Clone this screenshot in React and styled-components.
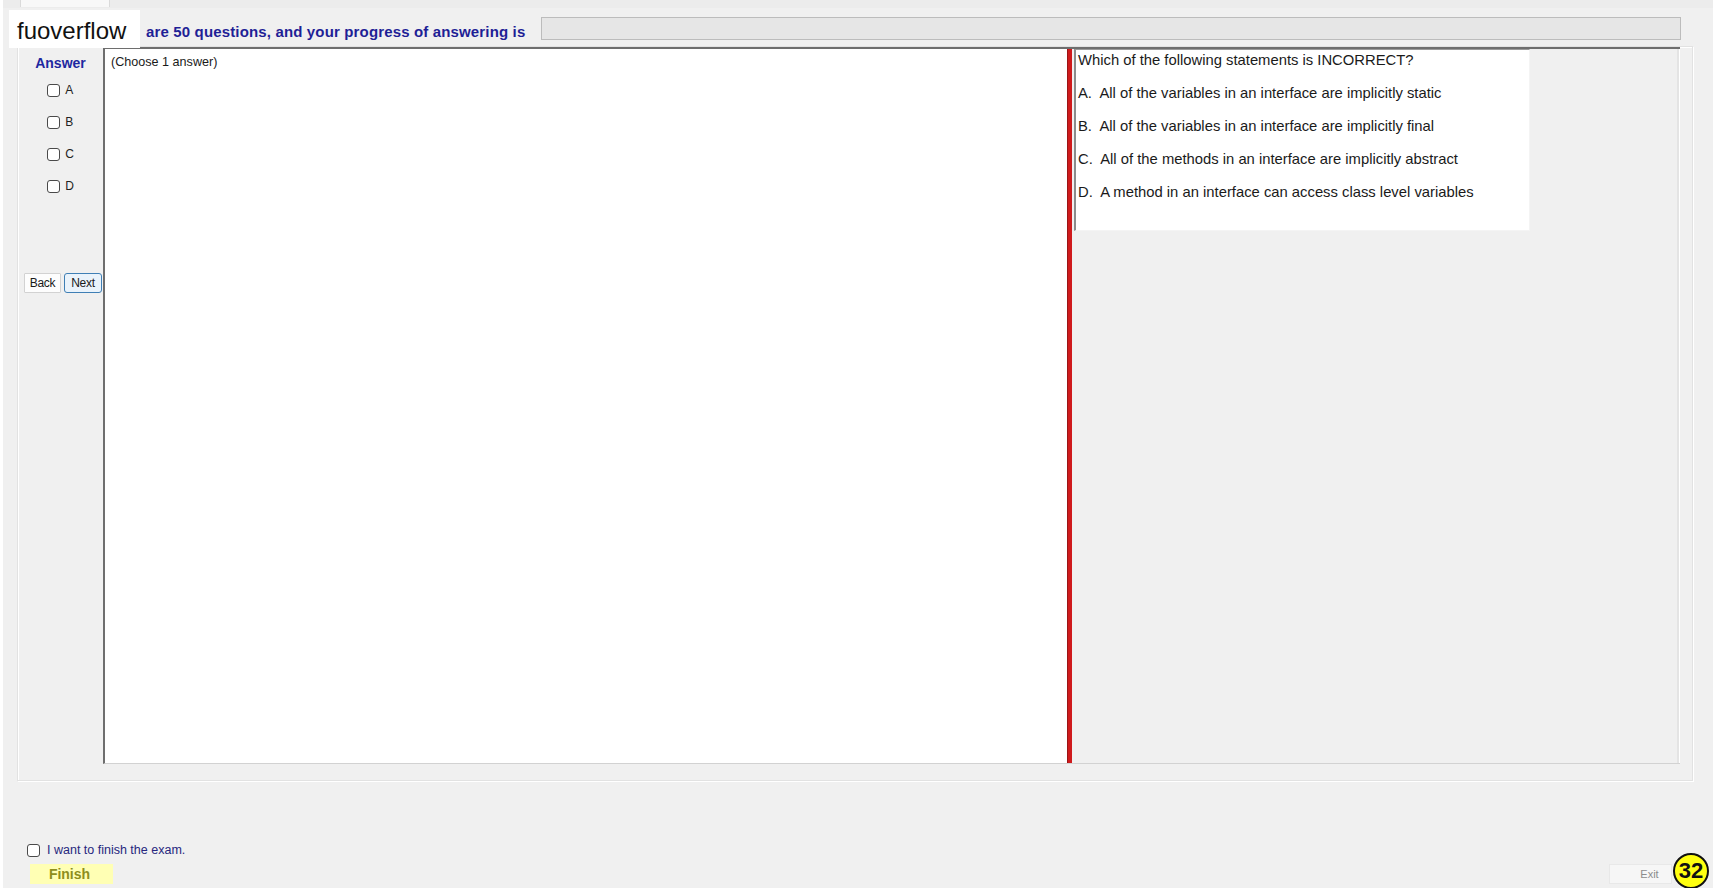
import React from "react";
import styled, { createGlobalStyle } from "styled-components";

const GlobalStyle = createGlobalStyle`
  html, body {
    margin: 0;
    padding: 0;
    background: #ffffff;
    font-family: "Liberation Sans", Arial, sans-serif;
    overflow: hidden;
  }
`;

const Window = styled("div")`
  position: relative;
  width: 1710px;
  height: 888px;
  margin-left: 3px;
  background: #f0f0f0;
  display: flex;
  flex-direction: column;
  box-sizing: border-box;
`;

const TabStrip = styled("div")`
  height: 8px;
  padding-left: 17px;
  display: flex;
  background: #ececec;
`;

const Tab = styled("div")`
  width: 88px;
  height: 7px;
  background: #f8f8f8;
  border: 1px solid #dadada;
  border-top: 0;
  border-bottom: 0;
`;

const Header = styled("div")`
  height: 38px;
  display: flex;
  align-items: flex-start;
  padding-left: 6px;
  position: relative;
  z-index: 1;
`;

const Logo = styled("div")`
  width: 131px;
  height: 38px;
  margin-top: 2px;
  background: #ffffff;
  color: #111;
  font-size: 24px;
  line-height: 42px;
  padding-left: 8px;
  box-sizing: border-box;
`;

const ProgressLabel = styled("div")`
  margin-left: 6px;
  margin-top: 15px;
  color: #1f1f96;
  font-weight: bold;
  font-size: 15px;
  letter-spacing: 0.15px;
  line-height: 18px;
  white-space: nowrap;
`;

const ProgressBar = styled("div")`
  flex: 1;
  height: 23px;
  margin: 9px 32px 0 16px;
  background: #e6e6e6;
  border: 1px solid #bcbcbc;
  box-sizing: border-box;
`;

const Frame = styled("div")`
  margin: 0 20px 0 14px;
  height: 735px;
  box-sizing: border-box;
  border: 1px solid #e2e2e2;
  box-shadow: inset 1px 1px 0 #ffffff, 1px 1px 0 #ffffff;
  display: flex;
  padding: 0 12px 16px 0;
`;

const LeftCol = styled("div")`
  width: 85px;
  flex: none;
  display: flex;
  flex-direction: column;
  align-items: center;
`;

const AnswerTitle = styled("div")`
  margin-top: 7px;
  color: #1e28a0;
  font-weight: bold;
  font-size: 14px;
  line-height: 18px;
`;

const ChoiceList = styled("div")`
  margin-top: 2px;
  display: flex;
  flex-direction: column;
`;

const ChoiceRow = styled("label")`
  height: ${(p) => p.$h || 32}px;
  display: flex;
  align-items: center;
  gap: ${(p) => p.$gap || 5}px;
  font-size: ${(p) => p.$size || 12}px;
  color: ${(p) => p.$color || "#222"};
`;

const Box = styled("span")`
  width: 13px;
  height: 13px;
  box-sizing: border-box;
  border: 1px solid #4a4a4a;
  border-radius: 3px;
  background: #ffffff;
  flex: none;
`;

const NavRow = styled("div")`
  margin-top: 71px;
  display: flex;
  gap: 3px;
  align-self: flex-start;
  padding-left: 6px;
`;

const NavButton = styled("button")`
  width: ${(p) => p.$w}px;
  height: 20px;
  padding: 0;
  font-family: inherit;
  font-size: 12px;
  letter-spacing: -0.3px;
  color: #1a1a1a;
  background: ${(p) => (p.$focused ? "#eaf3fb" : "#fdfdfd")};
  border: 1px solid ${(p) => (p.$focused ? "#3f7fb5" : "#d2d2d2")};
  border-radius: ${(p) => (p.$focused ? 3 : 1)}px;
`;

const QuestionArea = styled("div")`
  flex: 1;
  display: flex;
  border-top: 2px solid #6e6e6e;
  border-left: 2px solid #6e6e6e;
  border-bottom: 1px solid #d2d2d2;
`;

const AnswerPane = styled("div")`
  width: 962px;
  flex: none;
  background: #ffffff;
  padding: 5px 6px;
  box-sizing: border-box;
  font-size: 12.6px;
  color: #1a1a1a;
  line-height: 16px;
`;

const Splitter = styled("div")`
  width: 5px;
  flex: none;
  background: #cf1a1c;
  border-left: 1px solid #9a1416;
  box-sizing: border-box;
`;

const QuestionPane = styled("div")`
  flex: 1;
  padding-left: 2px;
  background: #f0f0f0;
  border-right: 1px solid #ffffff;
  box-shadow: inset -2px 0 0 #e4e4e4;
`;

const QuestionBox = styled("div")`
  width: 456px;
  height: 182px;
  box-sizing: border-box;
  background: #ffffff;
  border-left: 2px solid #8c8c8c;
  border-top: 1px solid #9a9a9a;
  border-right: 1px solid #f4f4f4;
  border-bottom: 1px solid #f4f4f4;
  padding: 0 0 0 2px;
  font-size: 14.8px;
  color: #1a1a1a;
`;

const QuestionLine = styled("div")`
  line-height: 20px;
  margin-bottom: 13px;
  white-space: pre;
`;

const Footer = styled("div")`
  flex: 1;
  display: flex;
  justify-content: space-between;
  align-items: flex-end;
  padding: 0 41px 4px 24px;
`;

const FinishBlock = styled("div")`
  display: flex;
  flex-direction: column;
  gap: 5px;
`;

const FinishButton = styled("button")`
  margin-left: 3px;
  width: 83px;
  height: 20px;
  padding: 0 4px 0 0;
  border: 0;
  background: #ffffb4;
  color: #8e8e1c;
  font-family: inherit;
  font-weight: bold;
  font-size: 14px;
`;

const ExitButton = styled("button")`
  width: 63px;
  height: 20px;
  padding: 0 0 0 18px;
  border: 1px solid #e8e8e8;
  background: #f6f6f6;
  color: #8c8c8c;
  font-family: inherit;
  font-size: 11px;
  text-align: center;
`;

const Badge = styled("div")`
  position: absolute;
  left: 1670px;
  top: 853px;
  width: 36px;
  height: 36px;
  box-sizing: border-box;
  border-radius: 50%;
  border: 2px solid #111;
  background: #ffff10;
  color: #111;
  font-weight: bold;
  font-size: 22px;
  display: flex;
  align-items: center;
  justify-content: center;
`;

const choices = ["A", "B", "C", "D"];

const question = [
  "Which of the following statements is INCORRECT?",
  "A.  All of the variables in an interface are implicitly static",
  "B.  All of the variables in an interface are implicitly final",
  "C.  All of the methods in an interface are implicitly abstract",
  "D.  A method in an interface can access class level variables",
];

export default function App() {
  return (
    <>
      <GlobalStyle />
      <Window>
        <TabStrip>
          <Tab />
        </TabStrip>
        <Header>
          <Logo>fuoverflow</Logo>
          <ProgressLabel>
            are 50 questions, and your progress of answering is
          </ProgressLabel>
          <ProgressBar />
        </Header>
        <Frame>
          <LeftCol>
            <AnswerTitle>Answer</AnswerTitle>
            <ChoiceList>
              {choices.map((c) => (
                <ChoiceRow key={c}>
                  <Box />
                  {c}
                </ChoiceRow>
              ))}
            </ChoiceList>
            <NavRow>
              <NavButton $w={37}>Back</NavButton>
              <NavButton $w={38} $focused>
                Next
              </NavButton>
            </NavRow>
          </LeftCol>
          <QuestionArea>
            <AnswerPane>(Choose 1 answer)</AnswerPane>
            <Splitter />
            <QuestionPane>
              <QuestionBox>
                {question.map((line) => (
                  <QuestionLine key={line}>{line}</QuestionLine>
                ))}
              </QuestionBox>
            </QuestionPane>
          </QuestionArea>
        </Frame>
        <Footer>
          <FinishBlock>
            <ChoiceRow $h={18} $gap={7} $size={12.5} $color="#27277e">
              <Box />
              I want to finish the exam.
            </ChoiceRow>
            <FinishButton>Finish</FinishButton>
          </FinishBlock>
          <ExitButton>Exit</ExitButton>
        </Footer>
        <Badge>32</Badge>
      </Window>
    </>
  );
}
